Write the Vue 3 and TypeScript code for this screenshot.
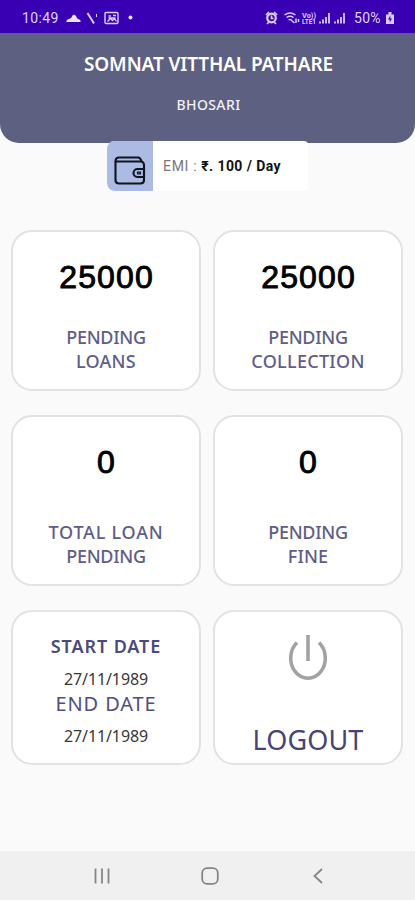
<script setup lang="ts">
interface Line {
  text: string
  tracking: number
}

interface Stat {
  value: string
  lines: Line[]
}

const stats: Stat[] = [
  { value: '25000', lines: [{ text: 'PENDING', tracking: -0.3 }, { text: 'LOANS', tracking: 0.3 }] },
  { value: '25000', lines: [{ text: 'PENDING', tracking: -0.3 }, { text: 'COLLECTION', tracking: 0.3 }] },
  { value: '0', lines: [{ text: 'TOTAL LOAN', tracking: 0.8 }, { text: 'PENDING', tracking: -0.3 }] },
  { value: '0', lines: [{ text: 'PENDING', tracking: -0.3 }, { text: 'FINE', tracking: 0.1 }] },
]
</script>

<template>
  <div class="screen">
    <div class="status">
      <span class="clock">10:49</span>
      <svg class="left-icons" width="72" height="16" viewBox="0 0 72 16" fill="none" stroke="#d9cdf5">
        <path d="M1.500 12Q1 9.500 4 9q2.500-.5 3.500-3.500Q9 4 11 6q.8 2.500 2 3 3 .5 2.500 3z" fill="#e9e2fb" stroke="none" />
        <path d="M22.500 3l6.500 10.500" stroke-width="2" />
        <path d="M31.500 4v3" stroke-width="1" />
        <rect x="40" y="2.500" width="13" height="11" rx="1" stroke-width="1.400" />
        <path d="M42.500 11.500l3-3 2 2 2-2 2 3M43.500 6h2.500M48 5.500h3M43.500 8h7" stroke-width="1.300" />
        <circle cx="65.500" cy="7.500" r="2" fill="#e9e2fb" stroke="none" />
      </svg>
      <svg class="right-icons" width="84" height="16" viewBox="0 0 84 16" fill="none" stroke="#d9cdf5">
        <circle cx="7.500" cy="8" r="4.300" stroke-width="2.200" />
        <path d="M2 5l3-3M13 5l-3-3M3 14l2-2M12 14l-2-2M7.500 5.500v3h2" stroke-width="1.700" />
        <path d="M20.500 5q5.500-4 11 0M22.500 7.500q3.500-2.500 7 0M24.500 10q1.500-1 3 0M27 10l3.500 3M32 8.500v4.500M34.500 9v3" stroke-width="1.500" />
        <text x="38" y="7.500" textLength="14" lengthAdjust="spacingAndGlyphs" class="tiny">Vo))</text>
        <text x="38" y="14" textLength="14" lengthAdjust="spacingAndGlyphs" class="tiny">LTE1</text>
        <path d="M56 13.500v-2M59 13.500V9.500M62 13.500V7M65 13.500V3M71 13.500v-2M74 13.500V9.500M77 13.500V7M80 13.500V3" stroke-width="1.800" />
      </svg>
      <span class="percent">50%</span>
      <svg class="battery" width="10" height="14" viewBox="0 0 10 14">
        <path d="M3.500 1h3v2.500H9V13H1V3.500h2.500z" fill="#d9cdf5" />
        <path d="M5.300 4.500L3 8.500h1.700v3l2.300-4H5.300z" fill="#3a00b0" />
      </svg>
    </div>

    <header class="header">
      <h1 class="name">SOMNAT VITTHAL PATHARE</h1>
      <p class="place">BHOSARI</p>
    </header>

    <div class="emi">
      <div class="wallet">
        <svg width="32" height="29" viewBox="0 0 32 29" fill="none" stroke="#10141e" stroke-width="2.100" stroke-linejoin="round">
          <path d="M1.500 5.500V24q0 3.500 3.500 3.500h21.500q3.500 0 3.500-3.500V9q0-3.500-3.500-3.500z" />
          <path d="M1.500 5.500Q1.500 1.500 5 1.500h19q2.500 0 3.500 4" />
          <path d="M30 13h-6.500a4 4 0 0 0 0 8H30z" />
          <path d="M23.500 16.200h3v1.600h-3z" stroke-width="1.200" />
        </svg>
      </div>
      <p class="emi-text"><span class="emi-label">EMI :</span> <b>₹. 100 / Day</b></p>
    </div>

    <main class="grid">
      <section v-for="(stat, i) in stats" :key="i" class="card">
        <strong class="value">{{ stat.value }}</strong>
        <p class="label">
          <span v-for="line in stat.lines" :key="line.text" :style="{ letterSpacing: line.tracking + 'px' }">{{ line.text }}</span>
        </p>
      </section>

      <section class="card dates">
        <span class="start">START DATE</span>
        <span class="date">27/11/1989</span>
        <span class="end">END DATE</span>
        <span class="date last">27/11/1989</span>
      </section>

      <section class="card logout">
        <svg width="40" height="48" viewBox="0 0 40 48" fill="none" stroke="#a2a2a2" stroke-width="3.600">
          <path d="M20 1v26" />
          <path d="M9 8.500A17.300 20.200 0 1 0 31 8.500" />
        </svg>
        <span>LOGOUT</span>
      </section>
    </main>

    <nav class="nav">
      <svg width="18" height="18" viewBox="0 0 18 18"><path d="M2.500 1.500v15M9 1.500v15M15.500 1.500v15" /></svg>
      <svg width="18" height="18" viewBox="0 0 18 18"><rect x="1.200" y="1.200" width="15.600" height="15.600" rx="4.800" /></svg>
      <svg width="18" height="18" viewBox="0 0 18 18"><path d="M13 2L5.500 9l7.500 7" /></svg>
    </nav>
  </div>
</template>

<style>
body {
  background: #fafafa;
}
</style>

<style scoped>
.screen {
  display: flex;
  flex-direction: column;
  height: 900px;
  background: #fafafa;
  font-family: "Noto Sans", sans-serif;
}
p,
h1 {
  margin: 0;
}
.status {
  display: flex;
  align-items: center;
  box-sizing: border-box;
  height: 33px;
  padding: 2px 20px 0 22px;
  background: #3900b3;
  color: #ded4f8;
  font: 14px/1 Roboto, sans-serif;
}
.clock {
  width: 43px;
  letter-spacing: 0.35px;
}
.right-icons {
  margin-left: auto;
}
.tiny {
  font: bold 7px Roboto, sans-serif;
  fill: #d9cdf5;
  stroke: none;
}
.percent {
  width: 28px;
  margin-left: 6px;
  margin-right: 3px;
  letter-spacing: 0.3px;
}
.header {
  box-sizing: border-box;
  height: 110px;
  padding-top: 17px;
  border-radius: 0 0 19px 19px;
  background: #5d6080;
  color: #fff;
  text-align: center;
}
.name {
  padding-left: 2px;
  font-size: 19px;
  line-height: 28px;
  font-weight: 600;
  letter-spacing: -0.12px;
  white-space: nowrap;
}
.place {
  margin-top: 13px;
  padding-left: 2px;
  font-size: 14px;
  line-height: 28px;
  font-weight: 500;
  letter-spacing: 0.4px;
  color: #f1f1f6;
}
.emi {
  display: flex;
  width: 201px;
  height: 50px;
  margin: -2px 0 0 107px;
  overflow: hidden;
  border-radius: 8px 4px 4px 8px;
  background: #fff;
  z-index: 1;
}
.wallet {
  display: flex;
  justify-content: center;
  align-items: center;
  width: 46px;
  padding-top: 8px;
  box-sizing: border-box;
  background: #abbbe4;
}
.emi-text {
  padding-left: 10px;
  font: 14px/51px Roboto, sans-serif;
  letter-spacing: 0.42px;
  color: #111;
  white-space: nowrap;
}
.emi-label {
  color: #777;
  letter-spacing: 0.7px;
}
.grid {
  display: grid;
  grid-template-columns: 190px 190px;
  grid-template-rows: 161px 171px 155px;
  column-gap: 12px;
  row-gap: 24px;
  padding: 39px 0 0 11px;
}
.card {
  display: flex;
  flex-direction: column;
  align-items: center;
  justify-content: space-between;
  box-sizing: border-box;
  padding: 27px 0 16px;
  border: 2px solid #e2e2e2;
  border-radius: 21px;
  background: #fff;
}
.value {
  font: 32px/36px "Liberation Sans", sans-serif;
  letter-spacing: 1.1px;
  margin-right: -1.1px;
  color: #000;
  -webkit-text-stroke: 0.9px #000;
}
.label {
  display: flex;
  flex-direction: column;
  align-items: center;
  font-size: 18px;
  font-weight: 500;
  line-height: 23.5px;
  color: #5f5d88;
}
.dates {
  justify-content: flex-start;
  padding-top: 20px;
}
.start {
  font-size: 18px;
  line-height: 28px;
  font-weight: 600;
  letter-spacing: 0.9px;
  color: #4b497d;
}
.date {
  margin-top: 6px;
  font-size: 16px;
  line-height: 26px;
  letter-spacing: -0.1px;
  color: #383838;
}
.end {
  margin-top: -2px;
  font-size: 20px;
  line-height: 28px;
  letter-spacing: 0.9px;
  color: #504e80;
}
.last {
  margin-top: 5px;
}
.logout {
  padding: 22px 0 5px;
  color: #45437a;
  font-size: 27px;
  line-height: 36px;
  letter-spacing: 0.1px;
}
.nav {
  display: flex;
  align-items: center;
  justify-content: center;
  gap: 90px;
  box-sizing: border-box;
  height: 49px;
  margin-top: auto;
  padding-top: 1px;
  padding-left: 5px;
  background: #f0f0f0;
}
.nav svg {
  fill: none;
  stroke: #858585;
  stroke-width: 1.8;
}
</style>
